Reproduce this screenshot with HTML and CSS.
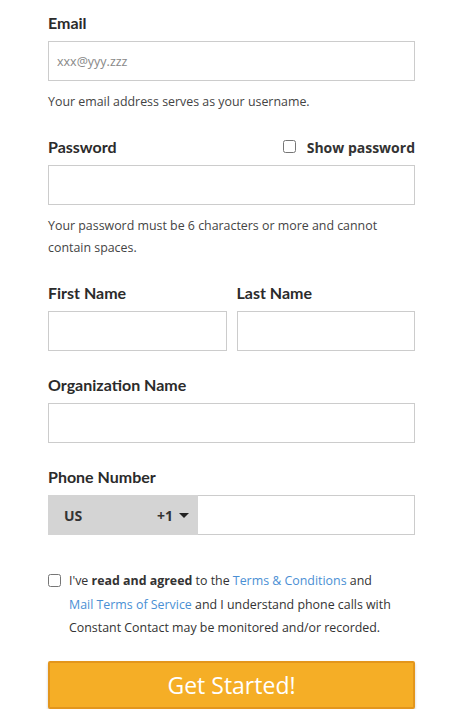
FILE: index.html
```html
<!DOCTYPE html><html lang="en">
<head>
  <meta charset="UTF-8">
  <meta name="viewport" content="width=device-width, initial-scale=1.0">
  <title>Sign Up</title>
  <link rel="stylesheet" href="styles.css">
</head>
<body><form class="signup">
  <div class="field">
    <label class="label" for="email">Email</label>
    <input type="text" id="email" class="text-input" placeholder="xxx@yyy.zzz">
    <p class="hint">Your email address serves as your username.</p>
  </div>
  <div class="field">
    <div class="label-row">
      <label class="label" for="password">Password</label>
      <label class="show-pw"><input type="checkbox"> Show password</label>
    </div>
    <input type="password" id="password" class="text-input">
    <p class="hint">Your password must be 6 characters or more and cannot contain spaces.</p>
  </div>
  <div class="name-row">
    <div class="field">
      <label class="label" for="first">First Name</label>
      <input type="text" id="first" class="text-input">
    </div>
    <div class="field">
      <label class="label" for="last">Last Name</label>
      <input type="text" id="last" class="text-input">
    </div>
  </div>
  <div class="field">
    <label class="label" for="org">Organization Name</label>
    <input type="text" id="org" class="text-input">
  </div>
  <div class="field">
    <label class="label" for="phone">Phone Number</label>
    <div class="phone-row">
      <div class="country">
        <span>US</span>
        <span class="code">+1 <span class="caret"></span></span>
      </div>
      <input type="text" id="phone" class="text-input phone-input">
    </div>
  </div>
  <label class="agree">
    <input type="checkbox">
    <span class="agree-text">I've <b>read and agreed</b> to the <a href="#">Terms &amp; Conditions</a> and <a href="#">Mail Terms of Service</a> and I understand phone calls with Constant Contact may be monitored and/or recorded.</span>
  </label>
  <button type="button" class="submit">Get Started!</button>
</form></body>
</html>
```

FILE: styles.css
```css
* { box-sizing: border-box; }
body {
  margin: 0;
  padding: 0;
  font-family: 'Open Sans', sans-serif;
  color: #333;
  background: white;
}
.signup {
  width: 367px;
  margin-left: 48px;
  padding-top: 13px;
}
.field {
  margin-bottom: 24px;
}
.label {
  display: block;
  font-family: Lato, sans-serif;
  font-weight: bold;
  font-size: 16px;
  line-height: 20px;
  margin-bottom: 8px;
  color: #2b2b2b;
}
.label-row {
  display: flex;
  justify-content: space-between;
  align-items: flex-start;
}
.show-pw {
  display: flex;
  align-items: center;
  font-size: 14px;
  font-weight: bold;
  line-height: 20px;
  padding-top: 1px;
}
.show-pw input {
  margin: 0 11px 0 0;
  width: 13px;
  height: 13px;
  position: relative;
  top: -2px;
}
.text-input {
  display: block;
  width: 100%;
  height: 40px;
  border: 1px solid #ccc;
  padding: 0 8px;
  font-family: 'Open Sans', sans-serif;
  font-size: 12.5px;
  color: #333;
  outline: none;
  margin: 0;
}
.text-input::placeholder {
  color: #888;
}
.hint {
  margin: 10px 0 0;
  font-size: 12.4px;
  line-height: 22px;
  color: #444;
}
.name-row {
  display: flex;
  gap: 10px;
}
.name-row .field {
  flex: 1;
}
.phone-row {
  display: flex;
}
.country {
  width: 150px;
  height: 40px;
  background: #d4d4d4;
  display: flex;
  justify-content: space-between;
  align-items: center;
  padding: 0 9px 0 16px;
  font-size: 14px;
  font-weight: bold;
  flex-shrink: 0;
}
.code {
  display: flex;
  align-items: center;
}
.caret {
  display: inline-block;
  margin-left: 6px;
  border-left: 5.5px solid transparent;
  border-right: 5.5px solid transparent;
  border-top: 5px solid #222;
}
.phone-input {
  flex: 1;
  border-left: none;
}
.agree {
  display: flex;
  align-items: flex-start;
  margin-top: 34px;
  font-size: 12.4px;
  line-height: 23.5px;
  color: #333;
}
.agree input {
  margin: 5px 8px 0 0;
  width: 13px;
  height: 13px;
  flex-shrink: 0;
}
.agree-text {
  max-width: 328px;
}
.agree a {
  color: #4a8fd4;
  text-decoration: none;
}
.submit {
  display: block;
  width: 100%;
  height: 48px;
  margin-top: 21px;
  background: #f5ae26;
  border: 2px solid #e3961c;
  border-radius: 2px;
  box-shadow: 0 2px 3px rgba(0,0,0,0.2);
  color: white;
  font-family: 'Open Sans', sans-serif;
  font-size: 23px;
  cursor: pointer;
}
```
